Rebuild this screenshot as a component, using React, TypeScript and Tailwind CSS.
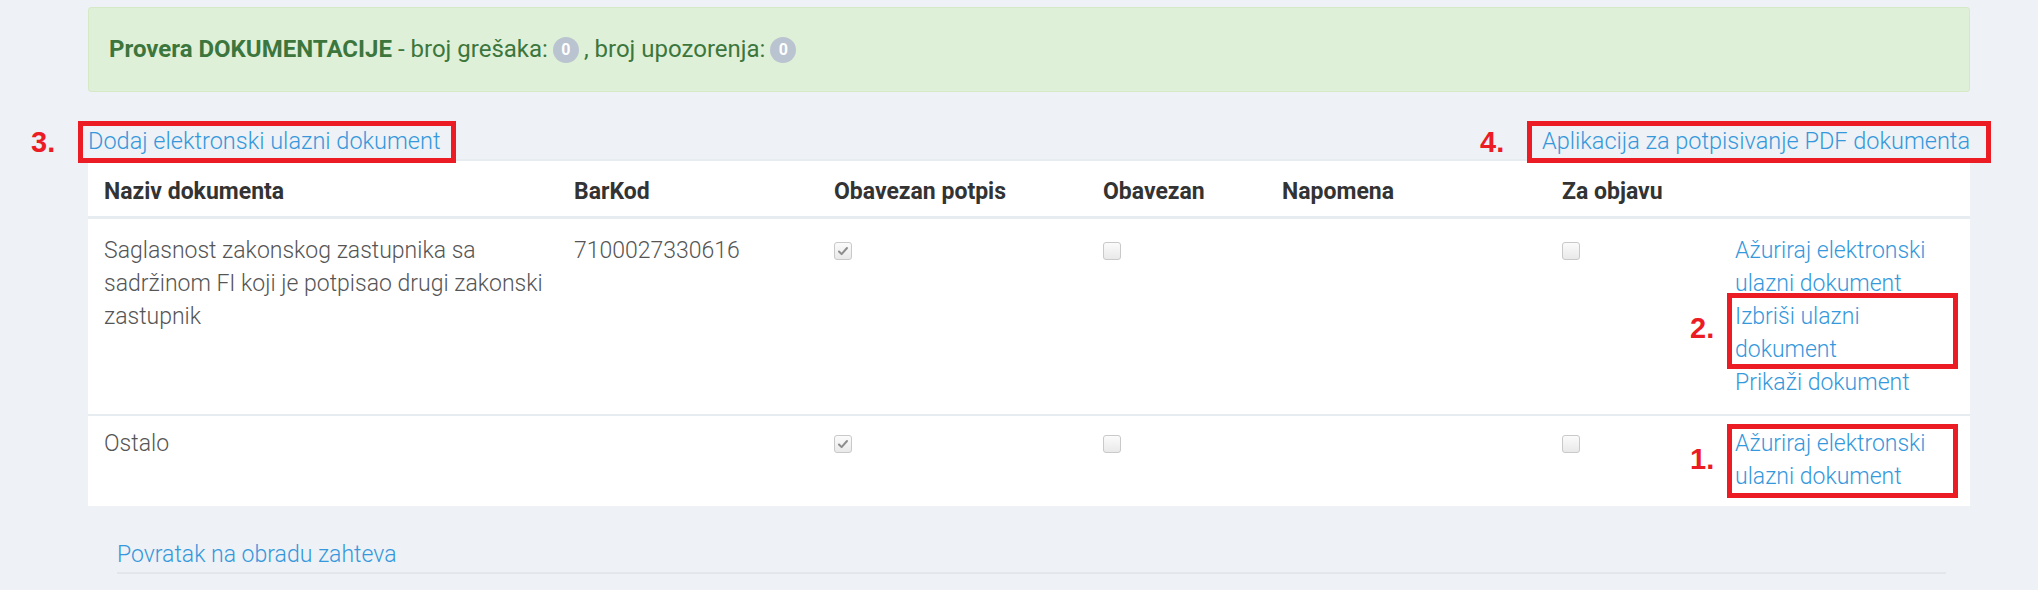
import React from "react";

type Row = {
  naziv: string;
  barkod: string;
  potpis: boolean;
  obavezan: boolean;
  objava: boolean;
  pad: string;
};

const rows: Row[] = [
  {
    naziv: "Saglasnost zakonskog zastupnika sa sadržinom FI koji je potpisao drugi zakonski zastupnik",
    barkod: "7100027330616",
    potpis: true,
    obavezan: false,
    objava: false,
    pad: "pt-[15px] pb-[15px]",
  },
  {
    naziv: "Ostalo",
    barkod: "",
    potpis: true,
    obavezan: false,
    objava: false,
    pad: "pt-[11px] pb-[13px]",
  },
];

function Badge() {
  return (
    <span className="mx-[5px] inline-flex h-[26px] w-[26px] items-center justify-center rounded-full bg-[#bac3d0] align-middle text-[16px] font-bold leading-none text-white">
      0
    </span>
  );
}

function Checkbox({ checked }: { checked: boolean }) {
  return (
    <div className="mt-[8px] flex h-[18px] w-[18px] items-center justify-center rounded-[3px] border border-[#c9c9c9] bg-gradient-to-b from-[#fbfbfb] to-[#e9e9e9]">
      {checked && (
        <svg width="12" height="12" viewBox="0 0 12 12">
          <path d="M2 6.5l2.6 2.6L10 3" fill="none" stroke="#8d8d8d" strokeWidth="2" strokeLinecap="round" strokeLinejoin="round" />
        </svg>
      )}
    </div>
  );
}

// red annotation frame drawn on top of a link
function Marker({ n, box, label }: { n: string; box: string; label: string }) {
  return (
    <>
      <span className={`pointer-events-none absolute border-[5px] border-[#ec1c24] ${box}`} />
      <span className={`absolute font-['Liberation_Sans_Narrow','Liberation_Sans',sans-serif] text-[29px] font-bold leading-none text-[#ec1c24] ${label}`}>{n}</span>
    </>
  );
}

export default function App() {
  return (
    <div className="min-h-[590px] w-full bg-[#eef1f5] pl-[88px] pr-[68px] pt-[7px] font-['Roboto',sans-serif] text-[23px] leading-[33px]">
      {/* Provera */}
      <div className="flex h-[85px] items-center rounded-[3px] border border-[#d6e9c6] bg-[#dff0d8] px-[20px] text-[24px] text-[#3c763d]">
        <span className="font-bold">Provera DOKUMENTACIJE</span>
        <span className="ml-[6px]">- broj grešaka:</span>
        <Badge />
        <span>, broj upozorenja:</span>
        <Badge />
      </div>

      <div className="mt-[33px] flex items-center justify-between font-light">
        <div className="relative">
          <a href="#" className="text-[23.5px] text-[#3598dc]">Dodaj elektronski ulazni dokument</a>
          <Marker n="3." box="-left-[10px] -right-[15px] -top-[4px] -bottom-[5px]" label="-left-[57px] top-[3px]" />
        </div>
        <div className="relative">
          <a href="#" className="text-[23.5px] text-[#3598dc]">Aplikacija za potpisivanje PDF dokumenta</a>
          <Marker n="4." box="-left-[15px] -right-[21px] -top-[4px] -bottom-[5px]" label="-left-[62px] top-[3px]" />
        </div>
      </div>

      <div className="mt-[1px] border-t-2 border-[#e7ecf1] bg-white">
        <table className="w-full table-fixed border-collapse text-left">
          <colgroup>
            <col className="w-[470px]" />
            <col className="w-[260px]" />
            <col className="w-[269px]" />
            <col className="w-[179px]" />
            <col className="w-[280px]" />
            <col className="w-[173px]" />
            <col />
          </colgroup>
          <thead>
            <tr className="border-b-[3px] border-[#e7ecf1] text-[#333]">
              <th className="px-[16px] pt-[14px] pb-[8px] font-bold">Naziv dokumenta</th>
              <th className="px-[16px] pt-[14px] pb-[8px] font-bold">BarKod</th>
              <th className="px-[16px] pt-[14px] pb-[8px] font-bold">Obavezan potpis</th>
              <th className="px-[16px] pt-[14px] pb-[8px] font-bold">Obavezan</th>
              <th className="px-[16px] pt-[14px] pb-[8px] font-bold">Napomena</th>
              <th className="px-[16px] pt-[14px] pb-[8px] font-bold">Za objavu</th>
              <th className="px-[16px] pt-[14px] pb-[8px]"></th>
            </tr>
          </thead>
          <tbody className="font-light text-[#555]">
            {rows.map((r, i) => (
              <tr key={i} className={i === 0 ? "border-b-2 border-[#e7ecf1]" : ""}>
                <td className={`pl-[16px] pr-[4px] align-top ${r.pad}`}>{r.naziv}</td>
                <td className={`px-[16px] align-top ${r.pad}`}>{r.barkod}</td>
                <td className={`px-[16px] align-top ${r.pad}`}>
                  <Checkbox checked={r.potpis} />
                </td>
                <td className={`px-[16px] align-top ${r.pad}`}>
                  <Checkbox checked={r.obavezan} />
                </td>
                <td className={`px-[16px] align-top ${r.pad}`}></td>
                <td className={`px-[16px] align-top ${r.pad}`}>
                  <Checkbox checked={r.objava} />
                </td>
                <td className={`px-[16px] align-top text-[#3598dc] ${r.pad}`}>
                  {i === 0 ? (
                    <>
                      <a href="#" className="block">Ažuriraj elektronski ulazni dokument</a>
                      <div className="relative">
                        <a href="#" className="block">Izbriši ulazni dokument</a>
                        <Marker n="2." box="-left-[8px] right-[-4px] -top-[7px] -bottom-[3px]" label="-left-[45px] top-[14px]" />
                      </div>
                      <a href="#" className="block">Prikaži dokument</a>
                    </>
                  ) : (
                    <div className="relative">
                      <a href="#" className="block">Ažuriraj elektronski ulazni dokument</a>
                      <Marker n="1." box="-left-[8px] right-[-4px] -top-[3px] -bottom-[5px]" label="-left-[45px] top-[18px]" />
                    </div>
                  )}
                </td>
              </tr>
            ))}
          </tbody>
        </table>
      </div>

      <div className="ml-[29px] mr-[24px] mt-[32px] border-b-2 border-[#e3e6ea] pb-[1px] font-light">
        <a href="#" className="text-[#3598dc]">Povratak na obradu zahteva</a>
      </div>
    </div>
  );
}
